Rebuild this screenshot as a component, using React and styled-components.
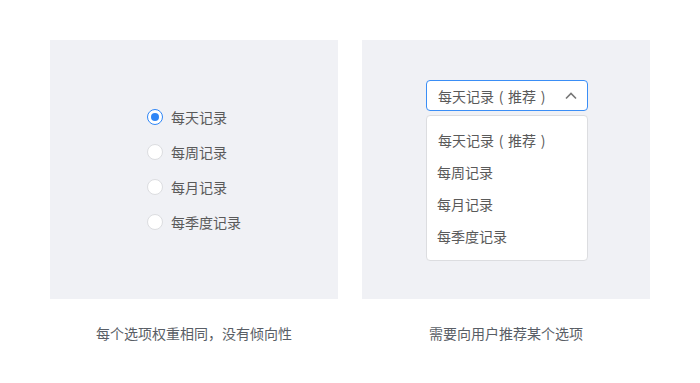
import React, { useState } from 'react';
import styled, { createGlobalStyle } from 'styled-components';

const GlobalStyle = createGlobalStyle`
  body {
    margin: 0;
    background: #fff;
    font-family: "Noto Sans CJK SC", "Noto Sans", sans-serif;
  }
`;

const Page = styled.div`
  width: 700px;
  padding-top: 40px;
  display: grid;
  grid-template-columns: 288px 288px;
  column-gap: 24px;
  row-gap: 24px;
  justify-content: center;
`;

const Panel = styled.div`
  height: 259px;
  background: #f0f1f5;
  display: flex;
  flex-direction: column;
  align-items: center;
  justify-content: ${(p) => (p.top ? 'flex-start' : 'center')};
  padding-top: ${(p) => (p.top ? '40px' : '0')};
  box-sizing: border-box;
`;

const Caption = styled.div`
  text-align: center;
  font-size: 14px;
  line-height: 20px;
  color: #595e66;
`;

const RadioGroup = styled.div`
  display: flex;
  flex-direction: column;
  gap: 15px;
`;

const RadioRow = styled.label`
  display: flex;
  align-items: center;
  gap: 8px;
  height: 20px;
  font-size: 14px;
  color: #5a5a5a;
  cursor: pointer;
`;

const RadioDot = styled.span`
  width: 16px;
  height: 16px;
  box-sizing: border-box;
  border-radius: 50%;
  background: #fff;
  border: 1px solid ${(p) => (p.checked ? '#2f86f6' : '#dcdde0')};
  display: flex;
  align-items: center;
  justify-content: center;
  &::after {
    content: '';
    width: 8px;
    height: 8px;
    border-radius: 50%;
    background: ${(p) => (p.checked ? '#2f86f6' : 'transparent')};
  }
`;

const SelectWrap = styled.div`
  width: 162px;
  display: flex;
  flex-direction: column;
  gap: 4px;
  margin-left: 2px;
`;

const SelectBox = styled.div`
  height: 31px;
  box-sizing: border-box;
  border: 1px solid #3a8ef6;
  border-radius: 4px;
  background: #fff;
  display: flex;
  align-items: center;
  justify-content: space-between;
  padding: 0 10px 0 11px;
  font-size: 14px;
  color: #5a5a5a;
`;

const Menu = styled.div`
  box-sizing: border-box;
  border: 1px solid #dcdde0;
  border-radius: 4px;
  background: #fff;
  padding: 8px 0;
  display: flex;
  flex-direction: column;
`;

const MenuItem = styled.div`
  height: 32px;
  display: flex;
  align-items: center;
  padding-left: ${(p) => (p.shift ? '11px' : '10px')};
  font-size: 14px;
  color: #5a5a5a;
`;

const Paren = styled.span`
  display: inline-block;
  width: 14px;
  text-align: center;
`;

const options = ['每周记录', '每月记录', '每季度记录'];

const Recommended = () => (
  <span>
    每天记录<Paren>(</Paren>推荐<Paren>)</Paren>
  </span>
);

const Chevron = () => (
  <svg width="12" height="8" viewBox="0 0 12 8">
    <path d="M1 6.5 L6 1.5 L11 6.5" fill="none" stroke="#777" strokeWidth="1.6" />
  </svg>
);

export default function App() {
  const [value, setValue] = useState('每天记录');
  const radios = ['每天记录', ...options];

  return (
    <>
      <GlobalStyle />
      <Page>
        <Panel>
          <RadioGroup>
            {radios.map((r) => (
              <RadioRow key={r} onClick={() => setValue(r)}>
                <RadioDot checked={value === r} />
                {r}
              </RadioRow>
            ))}
          </RadioGroup>
        </Panel>
        <Panel top>
          <SelectWrap>
            <SelectBox>
              <Recommended />
              <Chevron />
            </SelectBox>
            <Menu>
              <MenuItem shift>
                <Recommended />
              </MenuItem>
              {options.map((o) => (
                <MenuItem key={o}>{o}</MenuItem>
              ))}
            </Menu>
          </SelectWrap>
        </Panel>
        <Caption>每个选项权重相同，没有倾向性</Caption>
        <Caption>需要向用户推荐某个选项</Caption>
      </Page>
    </>
  );
}
